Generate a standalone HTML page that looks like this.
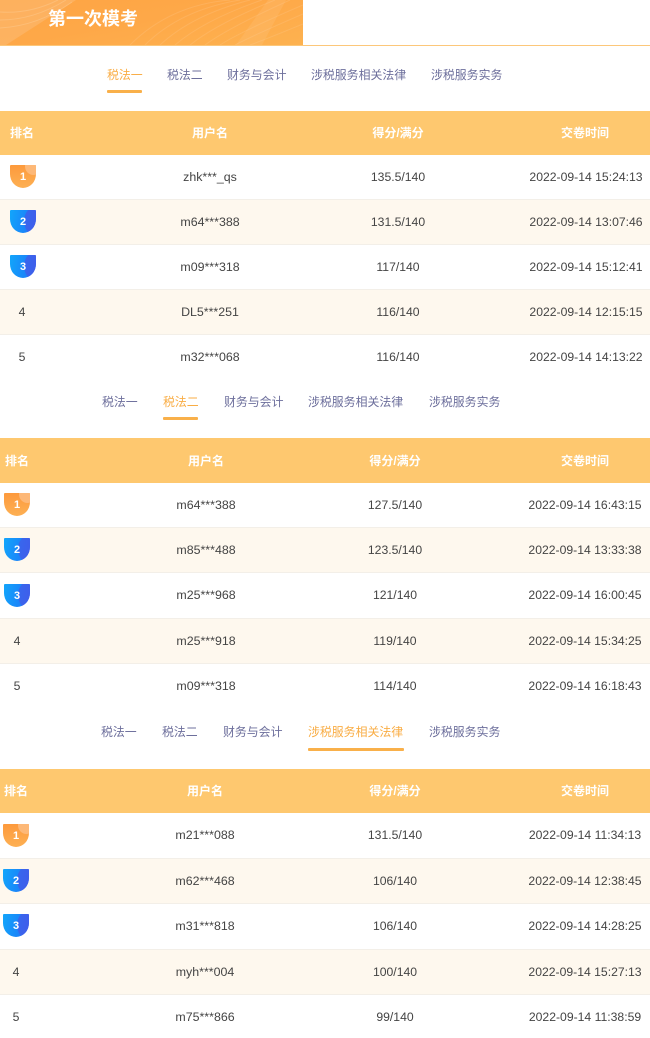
<!DOCTYPE html>
<html lang="zh"><head><meta charset="utf-8"><title>第一次模考</title>
<style>
*{margin:0;padding:0;box-sizing:border-box}
html,body{width:650px;height:1038px;background:#fff;overflow:hidden}
body{position:relative;font-family:"Liberation Sans","Noto Sans CJK SC",sans-serif;color:#444;filter:blur(.3px)}
.a{position:absolute;white-space:nowrap}
.c{position:absolute;white-space:nowrap;transform:translateX(-50%);font-size:12.2px;line-height:16px;color:#444}
.n{font-size:12.4px}
.t{position:absolute;white-space:nowrap;font-size:11.9px;line-height:16px;color:#6d6f9c}
.on{color:#f9ad45}
.u{position:absolute;height:3px;background:#f9b04a;border-radius:1px}
.h{position:absolute;left:0;width:650px;background:#fec86f}
.th{position:absolute;white-space:nowrap;transform:translateX(-50%);font-size:12px;font-weight:bold;line-height:16px;color:#fff}
.r{position:absolute;left:0;width:650px;background:#fef8ee;border-top:1px solid #f3efe8;border-bottom:1px solid #f3efe8}
.b{position:absolute;width:26px;height:23px;border-radius:1px 1px 13px 13px/1px 1px 14px 14px;color:#fff;font-size:11px;font-weight:bold;text-align:center;line-height:24px;overflow:hidden}
.b1{background:linear-gradient(180deg,#fd9a3c,#fdb054)}
.b1:before{content:"";position:absolute;right:-6px;top:-7px;width:17px;height:17px;border-radius:50%;background:#fdb877}
.b2{background:linear-gradient(100deg,#12a6fb 0%,#1a86f9 60%,#2f6cf0 100%)}
.b2:before{content:"";position:absolute;left:14px;top:-4px;width:26px;height:30px;background:#4a55e6;border-radius:50%;opacity:.65}
.b span{position:relative}
</style></head><body>

<!-- banner -->
<div class="a" style="left:0;top:0;width:303px;height:45px;background:linear-gradient(170deg,#fea544 0%,#fea848 45%,#fdb250 100%);overflow:hidden">
<svg width="303" height="45" style="position:absolute;left:0;top:0" fill="none">
<path d="M0 45 L6 45 L76 0 L0 0Z" fill="#fdc288" opacity=".4"/>
<path d="M0 12 Q30 14 58 0 M0 20 Q34 20 66 0 M0 28 Q38 26 72 2" stroke="#ffe3bd" stroke-width="1" opacity=".25"/>
<path d="M236 45 L268 0 L286 0 L262 45Z" fill="#fdc78a" opacity=".22"/>
<path d="M130 45 Q170 5 230 0 M145 45 Q180 10 240 0 M160 45 Q192 15 250 0 M175 45 Q204 20 262 0 M190 45 Q216 24 275 0 M205 45 Q228 28 290 0 M220 45 Q240 32 303 5 M235 45 Q252 36 303 14 M250 45 Q264 40 303 24" stroke="#ffd9a8" stroke-width="1" opacity=".2"/>
</svg>
<div class="a" style="left:48px;top:7px;font-size:18px;line-height:25px;font-weight:bold;color:#fff">第一次模考</div>
</div>
<div class="a" style="left:0;top:45px;width:650px;height:1px;background:#fcc77a"></div>

<!-- section 1 -->
<div class="t on" style="left:107px;top:67px">税法一</div>
<div class="t" style="left:167px;top:67px">税法二</div>
<div class="t" style="left:227px;top:67px">财务与会计</div>
<div class="t" style="left:311px;top:67px">涉税服务相关法律</div>
<div class="t" style="left:431px;top:67px">涉税服务实务</div>
<div class="u" style="left:107px;top:90px;width:35px"></div>
<div class="h" style="top:111px;height:44px"></div>
<div class="th" style="left:22px;top:125px">排名</div>
<div class="th" style="left:210px;top:125px">用户名</div>
<div class="th" style="left:398px;top:125px">得分/满分</div>
<div class="th" style="left:585px;top:125px">交卷时间</div>
<div class="r" style="top:199px;height:46px"></div>
<div class="r" style="top:289px;height:46px"></div>
<div class="b b1" style="left:10px;top:165px"><span>1</span></div>
<div class="b b2" style="left:10px;top:210px"><span>2</span></div>
<div class="b b2" style="left:10px;top:255px"><span>3</span></div>
<div class="c" style="left:22px;top:304px">4</div>
<div class="c" style="left:22px;top:349px">5</div>
<div class="c n" style="left:210px;top:169px">zhk***_qs</div>
<div class="c n" style="left:210px;top:214px">m64***388</div>
<div class="c n" style="left:210px;top:259px">m09***318</div>
<div class="c n" style="left:210px;top:304px">DL5***251</div>
<div class="c n" style="left:210px;top:349px">m32***068</div>
<div class="c" style="left:398px;top:169px">135.5/140</div>
<div class="c" style="left:398px;top:214px">131.5/140</div>
<div class="c" style="left:398px;top:259px">117/140</div>
<div class="c" style="left:398px;top:304px">116/140</div>
<div class="c" style="left:398px;top:349px">116/140</div>
<div class="c" style="left:586px;top:169px">2022-09-14 15:24:13</div>
<div class="c" style="left:586px;top:214px">2022-09-14 13:07:46</div>
<div class="c" style="left:586px;top:259px">2022-09-14 15:12:41</div>
<div class="c" style="left:586px;top:304px">2022-09-14 12:15:15</div>
<div class="c" style="left:586px;top:349px">2022-09-14 14:13:22</div>

<!-- section 2 -->
<div class="t" style="left:102px;top:394px">税法一</div>
<div class="t on" style="left:163px;top:394px">税法二</div>
<div class="t" style="left:224px;top:394px">财务与会计</div>
<div class="t" style="left:308px;top:394px">涉税服务相关法律</div>
<div class="t" style="left:429px;top:394px">涉税服务实务</div>
<div class="u" style="left:163px;top:417px;width:35px"></div>
<div class="h" style="top:438px;height:45px"></div>
<div class="th" style="left:17px;top:453px">排名</div>
<div class="th" style="left:206px;top:453px">用户名</div>
<div class="th" style="left:395px;top:453px">得分/满分</div>
<div class="th" style="left:585px;top:453px">交卷时间</div>
<div class="r" style="top:527px;height:46px"></div>
<div class="r" style="top:618px;height:46px"></div>
<div class="b b1" style="left:4px;top:493px"><span>1</span></div>
<div class="b b2" style="left:4px;top:538px"><span>2</span></div>
<div class="b b2" style="left:4px;top:584px"><span>3</span></div>
<div class="c" style="left:17px;top:633px">4</div>
<div class="c" style="left:17px;top:678px">5</div>
<div class="c n" style="left:206px;top:497px">m64***388</div>
<div class="c n" style="left:206px;top:542px">m85***488</div>
<div class="c n" style="left:206px;top:587px">m25***968</div>
<div class="c n" style="left:206px;top:633px">m25***918</div>
<div class="c n" style="left:206px;top:678px">m09***318</div>
<div class="c" style="left:395px;top:497px">127.5/140</div>
<div class="c" style="left:395px;top:542px">123.5/140</div>
<div class="c" style="left:395px;top:587px">121/140</div>
<div class="c" style="left:395px;top:633px">119/140</div>
<div class="c" style="left:395px;top:678px">114/140</div>
<div class="c" style="left:585px;top:497px">2022-09-14 16:43:15</div>
<div class="c" style="left:585px;top:542px">2022-09-14 13:33:38</div>
<div class="c" style="left:585px;top:587px">2022-09-14 16:00:45</div>
<div class="c" style="left:585px;top:633px">2022-09-14 15:34:25</div>
<div class="c" style="left:585px;top:678px">2022-09-14 16:18:43</div>

<!-- section 3 -->
<div class="t" style="left:101px;top:724px">税法一</div>
<div class="t" style="left:162px;top:724px">税法二</div>
<div class="t" style="left:223px;top:724px">财务与会计</div>
<div class="t on" style="left:308px;top:724px">涉税服务相关法律</div>
<div class="t" style="left:429px;top:724px">涉税服务实务</div>
<div class="u" style="left:308px;top:748px;width:96px"></div>
<div class="h" style="top:769px;height:44px"></div>
<div class="th" style="left:16px;top:783px">排名</div>
<div class="th" style="left:205px;top:783px">用户名</div>
<div class="th" style="left:395px;top:783px">得分/满分</div>
<div class="th" style="left:585px;top:783px">交卷时间</div>
<div class="r" style="top:858px;height:46px"></div>
<div class="r" style="top:949px;height:46px"></div>
<div class="b b1" style="left:3px;top:824px"><span>1</span></div>
<div class="b b2" style="left:3px;top:869px"><span>2</span></div>
<div class="b b2" style="left:3px;top:914px"><span>3</span></div>
<div class="c" style="left:16px;top:964px">4</div>
<div class="c" style="left:16px;top:1009px">5</div>
<div class="c n" style="left:205px;top:827px">m21***088</div>
<div class="c n" style="left:205px;top:873px">m62***468</div>
<div class="c n" style="left:205px;top:918px">m31***818</div>
<div class="c n" style="left:205px;top:964px">myh***004</div>
<div class="c n" style="left:205px;top:1009px">m75***866</div>
<div class="c" style="left:395px;top:827px">131.5/140</div>
<div class="c" style="left:395px;top:873px">106/140</div>
<div class="c" style="left:395px;top:918px">106/140</div>
<div class="c" style="left:395px;top:964px">100/140</div>
<div class="c" style="left:395px;top:1009px">99/140</div>
<div class="c" style="left:585px;top:827px">2022-09-14 11:34:13</div>
<div class="c" style="left:585px;top:873px">2022-09-14 12:38:45</div>
<div class="c" style="left:585px;top:918px">2022-09-14 14:28:25</div>
<div class="c" style="left:585px;top:964px">2022-09-14 15:27:13</div>
<div class="c" style="left:585px;top:1009px">2022-09-14 11:38:59</div>

</body></html>
